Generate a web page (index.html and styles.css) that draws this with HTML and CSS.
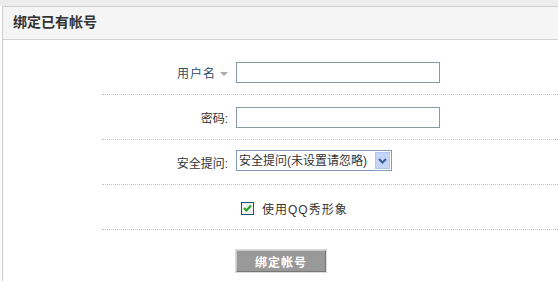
FILE: index.html
```html
<!DOCTYPE html>
<html lang="zh-CN">
<head>
<meta charset="UTF-8">
<title>绑定已有帐号</title>
<link rel="stylesheet" href="styles.css">
</head>
<body>
    <div class="topbar"></div>
    <div class="panel">
        <div class="panel-head">
            <h2>绑定已有帐号</h2>
        </div>
        <form class="bind-form">
            <div class="form-row">
                <label class="form-label user-label" for="username">用户名<span class="caret"></span></label>
                <input class="txt" type="text" id="username" name="username">
            </div>
            <div class="form-row">
                <label class="form-label" for="password">密码:</label>
                <input class="txt" type="password" id="password" name="password">
            </div>
            <div class="form-row">
                <label class="form-label" for="question">安全提问:</label>
                <span class="select-wrap">
                    <select id="question" name="question">
                        <option>安全提问(未设置请忽略)</option>
                    </select>
                    <span class="select-arrow">
                        <svg width="9" height="6" viewBox="0 0 9 6"><path d="M1 1 L4.5 4.5 L8 1" fill="none" stroke="#3b5d9c" stroke-width="2"/></svg>
                    </span>
                </span>
            </div>
            <div class="form-row">
                <span class="form-label"></span>
                <label class="check-label">
                    <span class="checkbox">
                        <svg width="9" height="8" viewBox="0 0 9 8"><path d="M1 4 L3.5 6.5 L8 1.5" fill="none" stroke="#21a121" stroke-width="2"/></svg>
                    </span>
                    使用QQ秀形象
                </label>
            </div>
            <div class="form-actions">
                <span class="form-label"></span>
                <button type="submit" class="btn">绑定帐号</button>
            </div>
        </form>
    </div>
</body>
</html>
```
FILE: styles.css
```css
body {
    margin: 0;
    padding: 0;
    background: #fff;
    font-family: "Liberation Sans", "Noto Sans CJK SC", sans-serif;
    font-size: 12px;
    color: #333;
}

.topbar {
    height: 6px;
    background: #ececec;
}

.panel {
    margin-left: 2px;
    border-top: 1px solid #cfcfcf;
    border-left: 1px solid #cfcfcf;
    height: 274px;
}

.panel-head {
    height: 32px;
    background: #f5f5f5;
    border-bottom: 1px solid #d2d2d2;
}

.panel-head h2 {
    margin: 0;
    padding-left: 10px;
    font-size: 14px;
    line-height: 31px;
    font-weight: bold;
    color: #333;
}

.bind-form {
    margin-left: 99px;
    padding-top: 10px;
}

.form-row {
    display: flex;
    align-items: center;
    height: 44px;
    border-bottom: 1px dotted #c4c4c4;
}

.form-label {
    width: 126px;
    padding-right: 8px;
    text-align: right;
    flex-shrink: 0;
}

.user-label {
    color: #2a5068;
    letter-spacing: 1px;
}

.caret {
    display: inline-block;
    margin-left: 4px;
    vertical-align: middle;
    border-left: 4px solid transparent;
    border-right: 4px solid transparent;
    border-top: 4px solid #aaa;
}

.txt {
    width: 204px;
    height: 21px;
    box-sizing: border-box;
    border: 1px solid #869aa3;
    padding: 0 3px;
    margin: 0;
}

.select-wrap {
    position: relative;
    display: inline-block;
    width: 156px;
    height: 21px;
    margin-top: -3px;
}

.select-wrap select {
    -webkit-appearance: none;
    appearance: none;
    width: 156px;
    height: 21px;
    box-sizing: border-box;
    border: 1px solid #7f9db9;
    background: #fff;
    padding: 0 0 0 2px;
    margin: 0;
    font-family: "Liberation Sans", "Noto Sans CJK SC", sans-serif;
    font-size: 12px;
    color: #333;
    border-radius: 0;
}

.select-arrow {
    position: absolute;
    right: 2px;
    top: 2px;
    width: 15px;
    height: 17px;
    background: #c5d5f7;
    border: 1px solid #b3c5ef;
    box-sizing: border-box;
    display: flex;
    align-items: center;
    justify-content: center;
}

.check-label {
    display: flex;
    align-items: center;
    margin-left: 5px;
    margin-top: 2px;
    letter-spacing: 1px;
}

.checkbox {
    width: 13px;
    height: 13px;
    box-sizing: border-box;
    border: 1px solid #1c5180;
    background: #f4f4f0;
    display: flex;
    align-items: center;
    justify-content: center;
    margin-right: 8px;
}

.form-actions {
    display: flex;
    padding-top: 20px;
}

.btn {
    width: 90px;
    height: 22px;
    margin: 0;
    padding: 0;
    background: #999;
    border: 1px solid #c8c8c8;
    border-right-color: #777;
    border-bottom-color: #777;
    outline: 1px solid #dcdcdc;
    color: #fff;
    font-weight: bold;
    font-size: 12px;
    letter-spacing: 1px;
    font-family: "Liberation Sans", "Noto Sans CJK SC", sans-serif;
    cursor: pointer;
}
```
